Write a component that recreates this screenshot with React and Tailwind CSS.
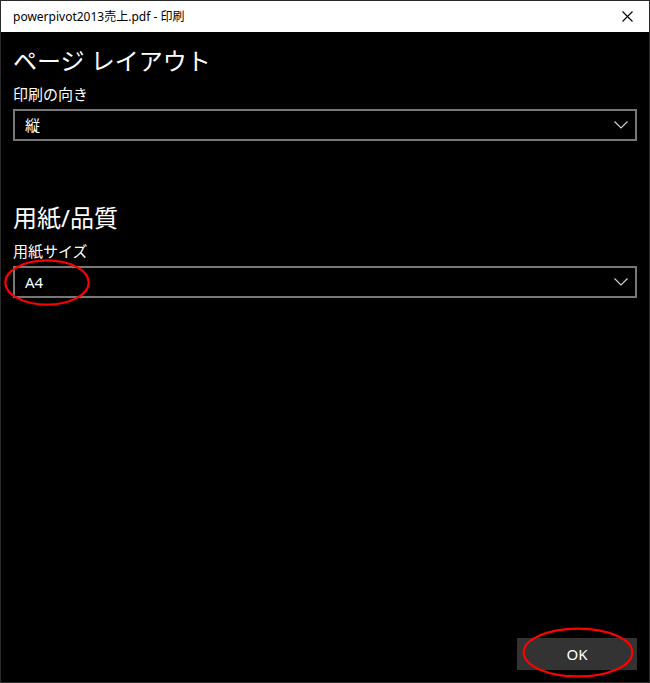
const font = { fontFamily: '"Noto Sans", "Noto Sans CJK JP", sans-serif' }

function Chevron() {
  return (
    <svg width="14" height="8" viewBox="0 0 14 8" className="shrink-0">
      <polyline points="0.5,0.5 7,7 13.5,0.5" fill="none" stroke="#d0d0d0" strokeWidth="1.2" />
    </svg>
  )
}

function Select({ value }) {
  return (
    <div className="h-[32px] border-2 border-[#777777] flex items-center justify-between pl-[10px] pr-[7px]">
      <span className="text-[15px] leading-none text-white">{value}</span>
      <Chevron />
    </div>
  )
}

function Ring({ className }) {
  return (
    <svg className={`absolute pointer-events-none ${className}`} viewBox="0 0 100 50" preserveAspectRatio="none">
      <ellipse cx="50" cy="25" rx="48.5" ry="23.5" fill="none" stroke="#ff0000" strokeWidth="2.2" vectorEffect="non-scaling-stroke" />
    </svg>
  )
}

export default function App() {
  return (
    <div className="relative w-[650px] h-[683px] border border-[#2b2b2b] bg-black flex flex-col" style={font}>
      <div className="h-[31px] bg-white flex items-center justify-between pl-[12px] pr-[16px] shrink-0">
        <span className="text-[12px] text-black">powerpivot2013売上.pdf - 印刷</span>
        <svg width="11" height="11" viewBox="0 0 11 11">
          <path d="M0.5 0.5 L10.5 10.5 M10.5 0.5 L0.5 10.5" stroke="#000" strokeWidth="1.1" />
        </svg>
      </div>

      <div className="flex-1 flex flex-col px-[12px] pt-[13px] pb-[12px]">
        <h1 className="text-[24px] leading-[32px] text-white font-normal">ページ レイアウト</h1>
        <div className="mt-[7px] text-[15px] leading-[20px] text-white">印刷の向き</div>
        <div className="mt-[5px]">
          <Select value="縦" />
        </div>

        <h2 className="mt-[61px] text-[24px] leading-[32px] text-white font-normal">用紙/品質</h2>
        <div className="mt-[7px] text-[15px] leading-[20px] text-white">用紙サイズ</div>
        <div className="mt-[5px]">
          <Select value="A4" />
        </div>

        <div className="flex-1" />

        <div className="flex justify-end">
          <button className="w-[120px] h-[32px] bg-[#333333] text-white text-[15px]">OK</button>
        </div>
      </div>

      <Ring className="left-[3px] top-[258px] w-[86px] h-[47px]" />
      <Ring className="left-[521px] top-[626px] w-[112px] h-[51px]" />
    </div>
  )
}
